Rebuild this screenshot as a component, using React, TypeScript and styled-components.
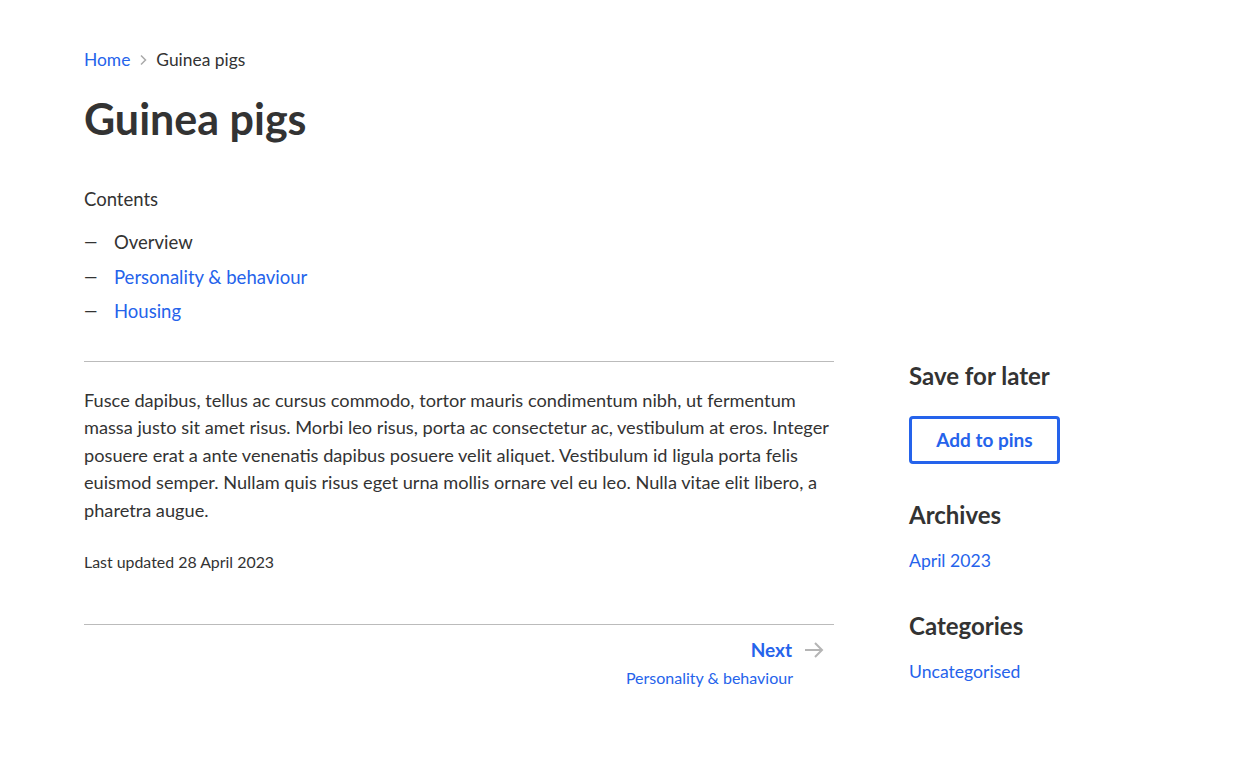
import styled, { createGlobalStyle } from 'styled-components'

const Global = createGlobalStyle`
  body {
    margin: 0;
    background: #fff;
    color: #333;
    font-family: Lato, "Open Sans", sans-serif;
  }
  a { color: #2563eb; text-decoration: none; }
`

const Page = styled.div`
  padding: 48px 84px;
`

const Crumbs = styled.nav`
  display: flex;
  align-items: center;
  gap: 9px;
  font-size: 17.4px;
  line-height: 24px;
`

const Title = styled.h1`
  margin: 21px 0 0;
  font-size: 43px;
  line-height: 52px;
  font-weight: 700;
`

const TocLabel = styled.div`
  margin-top: 42px;
  font-size: 18.5px;
  line-height: 24px;
`

const Toc = styled.ul`
  list-style: none;
  margin: 14px 0 0;
  padding: 0;
`

const TocItem = styled.li`
  display: flex;
  font-size: 18.5px;
  line-height: 34.5px;
  &::before {
    content: '—';
    width: 30px;
    font-size: 17px;
  }
`

const Columns = styled.div`
  display: grid;
  grid-template-columns: 750px 260px;
  column-gap: 75px;
  margin-top: 32px;
`

const Main = styled.main`
  border-top: 1px solid #bbb;
  padding-top: 25px;
`

const Body = styled.p`
  margin: 0;
  font-size: 18.2px;
  line-height: 27.5px;
`

const Updated = styled.p`
  margin: 27px 0 0;
  font-size: 15.9px;
  line-height: 22px;
`

const Pager = styled.div`
  margin-top: 51px;
  border-top: 1px solid #bbb;
  padding: 12px 10px 0 0;
  display: flex;
  flex-direction: column;
  align-items: flex-end;
`

const NextRow = styled.a`
  display: flex;
  align-items: center;
  gap: 13px;
  font-size: 19px;
  line-height: 26px;
  font-weight: 700;
`

const NextSub = styled.a`
  margin: 4px 31px 0 0;
  font-size: 16px;
  line-height: 22px;
`

const Aside = styled.aside``

const SideHeading = styled.h2<{ $gap?: number }>`
  margin: ${p => p.$gap ?? 0}px 0 0;
  font-size: 24px;
  line-height: 30px;
  font-weight: 700;
`

const PinButton = styled.button`
  margin-top: 25px;
  width: 151px;
  height: 48px;
  border: 3px solid #2563eb;
  border-radius: 4px;
  background: #fff;
  color: #2563eb;
  font-family: inherit;
  font-size: 19px;
  font-weight: 700;
  cursor: pointer;
`

const SideLink = styled.a`
  display: block;
  margin-top: 19px;
  font-size: 17.6px;
  line-height: 24px;
`

function Chevron() {
  return (
    <svg width="8" height="12" viewBox="0 0 8 12" fill="none" stroke="#aaa" strokeWidth="1.5">
      <path d="M2 1.5 6.5 6 2 10.5" />
    </svg>
  )
}

function Arrow() {
  return (
    <svg width="19" height="16" viewBox="0 0 19 16" fill="none" stroke="#b5b5b5" strokeWidth="2">
      <path d="M0 8h17M10 1l7 7-7 7" />
    </svg>
  )
}

export default function App() {
  return (
    <>
      <Global />
      <Page>
        <Crumbs>
          <a href="#">Home</a>
          <Chevron />
          <span>Guinea pigs</span>
        </Crumbs>
        <Title>Guinea pigs</Title>

        <TocLabel>Contents</TocLabel>
        <Toc>
          <TocItem>Overview</TocItem>
          <TocItem><a href="#">Personality &amp; behaviour</a></TocItem>
          <TocItem><a href="#">Housing</a></TocItem>
        </Toc>

        <Columns>
          <Main>
            <Body>
              Fusce dapibus, tellus ac cursus commodo, tortor mauris condimentum nibh, ut fermentum
              massa justo sit amet risus. Morbi leo risus, porta ac consectetur ac, vestibulum at eros.
              Integer posuere erat a ante venenatis dapibus posuere velit aliquet. Vestibulum id ligula
              porta felis euismod semper. Nullam quis risus eget urna mollis ornare vel eu leo. Nulla
              vitae elit libero, a pharetra augue.
            </Body>
            <Updated>Last updated 28 April 2023</Updated>
            <Pager>
              <NextRow href="#">Next <Arrow /></NextRow>
              <NextSub href="#">Personality &amp; behaviour</NextSub>
            </Pager>
          </Main>

          <Aside>
            <SideHeading>Save for later</SideHeading>
            <PinButton>Add to pins</PinButton>
            <SideHeading $gap={36}>Archives</SideHeading>
            <SideLink href="#">April 2023</SideLink>
            <SideHeading $gap={38}>Categories</SideHeading>
            <SideLink href="#">Uncategorised</SideLink>
          </Aside>
        </Columns>
      </Page>
    </>
  )
}
